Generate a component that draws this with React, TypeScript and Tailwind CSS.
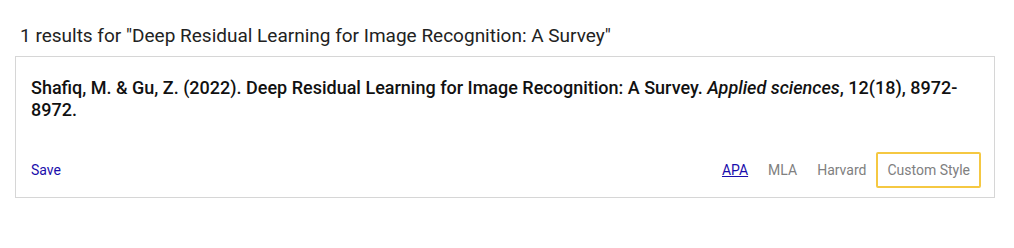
export default function App() {
  return (
    <div className="w-[1014px] h-[248px] bg-white font-['Roboto',sans-serif]">
      {/* RESULTS HEADER */}
      <div className="pl-5 pt-[22px] text-[19px] leading-[27px] text-[#222]">
        1 results for "Deep Residual Learning for Image Recognition: A Survey"
      </div>

      {/* RESULT CARD */}
      <div className="ml-[15px] mt-[7px] w-[980px] border border-[#d6d6d6] pl-[15px] pr-[13px] pt-5 pb-[9px]">
        <p className="text-[18px] leading-[22px] font-medium text-[#111]">
          Shafiq, M. &amp; Gu, Z. (2022). Deep Residual Learning for Image Recognition: A Survey.{" "}
          <i>Applied sciences</i>, 12(18), 8972-8972.
        </p>

        <div className="mt-[31px] flex items-center justify-between text-[14px] leading-[20px]">
          <a href="#" className="text-[#1a0dab]">
            Save
          </a>

          <div className="flex items-center">
            <a href="#" className="px-[10px] text-[#1a0dab] underline">
              APA
            </a>
            <a href="#" className="px-[10px] text-[#808080]">
              MLA
            </a>
            <a href="#" className="px-[10px] text-[#808080]">
              Harvard
            </a>
            <a
              href="#"
              className="border-2 border-[#f5c842] rounded-[2px] px-[9px] py-[6px] text-[#808080]"
            >
              Custom Style
            </a>
          </div>
        </div>
      </div>
    </div>
  );
}
